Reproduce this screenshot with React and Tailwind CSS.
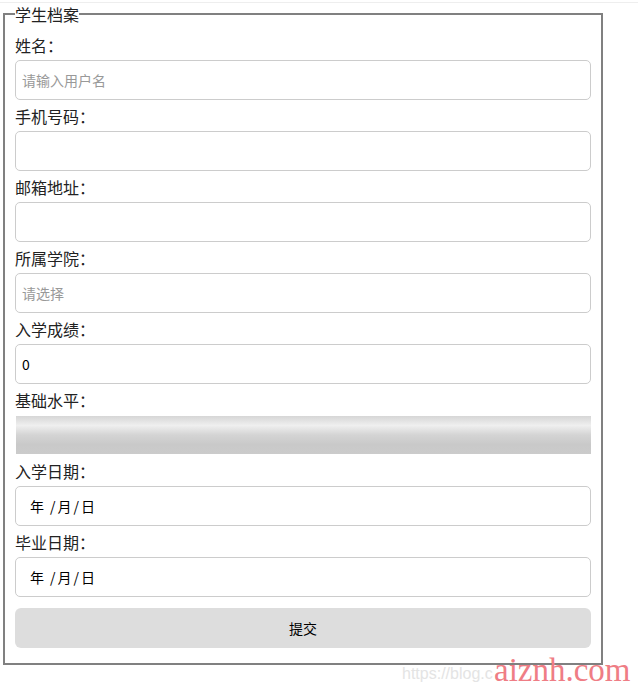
import React from 'react';

const FONT = { fontFamily: '"Microsoft YaHei", "Noto Sans CJK SC", "Noto Sans", sans-serif' };

function Label({ children }) {
  return <div className="h-[24px] leading-[24px] text-[16px] text-[#222] mb-[3px]">{children}：</div>;
}

function TextField({ placeholder, value }) {
  return (
    <input
      className="block w-full h-[40px] rounded-[5px] border border-[#cccccc] bg-white px-[6px] text-[14px] text-black placeholder:text-[#999] outline-none"
      placeholder={placeholder}
      defaultValue={value}
    />
  );
}

function DateField() {
  return (
    <div className="flex items-center w-full h-[40px] rounded-[5px] border border-[#cccccc] bg-white pl-[14px] text-[14px] text-black">
      <span>年</span>
      <span className="ml-[6px]">/</span>
      <span className="ml-[2px]">月</span>
      <span className="ml-[2px]">/</span>
      <span className="ml-[2px]">日</span>
    </div>
  );
}

function Field({ label, children, last }) {
  return (
    <div className={last ? '' : 'mb-[4px]'}>
      <Label>{label}</Label>
      {children}
    </div>
  );
}

export default function App() {
  return (
    <div className="relative w-[638px] h-[690px] bg-white overflow-hidden" style={FONT}>
      <div className="h-[2px] border-t border-[#eeeeee] mt-[2px] absolute top-0 left-0 right-0" />
      <fieldset className="ml-[3px] mt-[2px] w-[600px] border-2 border-[#808080] px-[10px] pb-[15px]">
        <legend className="text-[16px] leading-[24px] text-[#222]">学生档案</legend>
        <div className="pt-[7px]">
          <Field label="姓名">
            <TextField placeholder="请输入用户名" />
          </Field>
          <Field label="手机号码">
            <TextField />
          </Field>
          <Field label="邮箱地址">
            <TextField />
          </Field>
          <Field label="所属学院">
            <TextField placeholder="请选择" />
          </Field>
          <Field label="入学成绩">
            <TextField value="0" />
          </Field>
          <div className="mb-[5px]">
            <Label>基础水平</Label>
            <div className="mt-[4px] ml-[1px] h-[38px] bg-[linear-gradient(to_bottom,#d6d6d6_0%,#efefef_25%,#d4d4d4_50%,#c9c9c9_75%,#cbcbcb_100%)]" />
          </div>
          <Field label="入学日期">
            <DateField />
          </Field>
          <Field label="毕业日期" last>
            <DateField />
          </Field>
          <button className="mt-[11px] block w-full h-[40px] rounded-[6px] bg-[#dddddd] text-[14px] text-black">
            提交
          </button>
        </div>
      </fieldset>
      <div className="absolute left-[402px] top-[662px] text-[16px] text-[#e4e4e4]" style={{ fontFamily: '"Liberation Sans", Arial, sans-serif' }}>
        https://blog.c
      </div>
      <div className="absolute left-[494px] top-[650px] text-[33px] leading-[40px] text-[#ef7d85]" style={{ fontFamily: '"Liberation Serif", "Times New Roman", serif' }}>
        aiznh.com
      </div>
    </div>
  );
}
